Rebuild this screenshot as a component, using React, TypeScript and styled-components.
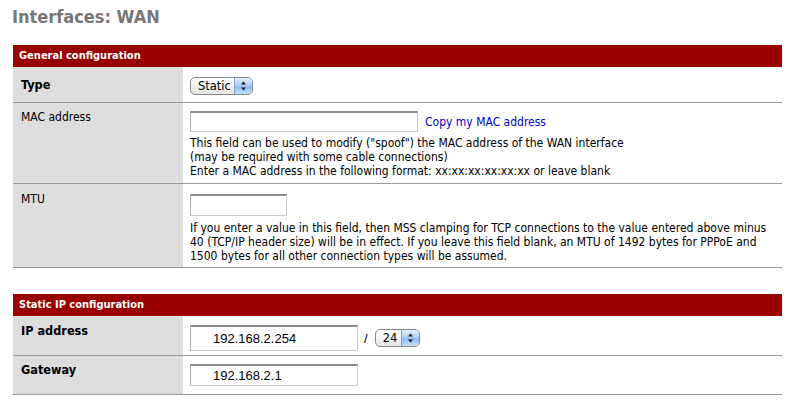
import React from 'react'
import styled, { createGlobalStyle } from 'styled-components'

const GlobalStyle = createGlobalStyle`
  body {
    margin: 0;
    background: #fff;
    font-family: "DejaVu Sans Condensed", "Liberation Sans", sans-serif;
    font-size: 12px;
    color: #000;
  }
`

const Page = styled.div`
  width: 802px;
  padding: 7px 20px 20px 13px;
  box-sizing: border-box;
`

const Title = styled.h1`
  margin: 0 0 0 -1px;
  font-family: "DejaVu Sans Condensed", "Liberation Sans", sans-serif;
  font-size: 18px;
  font-weight: bold;
  color: #777;
  line-height: 20px;
`

const Section = styled.div<{ $gap?: number }>`
  width: 769px;
  margin-top: ${p => p.$gap ?? 0}px;
`

const SectionHead = styled.div`
  background: #990000;
  color: #fff;
  font-weight: bold;
  font-size: 11px;
  height: 22px;
  line-height: 22px;
  padding-left: 6px;
`

const Row = styled.div`
  display: grid;
  grid-template-columns: 170px 1fr;
  border-bottom: 1px solid #999;
`

const Label = styled.div<{ $bold?: boolean; $top: number }>`
  background: #dddddd;
  padding: ${p => p.$top}px 8px 0;
  font-weight: ${p => (p.$bold ? 'bold' : 'normal')};
  font-size: ${p => (p.$bold ? '12.6px' : '12px')};
`

const Cell = styled.div<{ $pad: string }>`
  padding: ${p => p.$pad};
  display: flex;
  flex-direction: column;
  align-items: flex-start;
`

const Inline = styled.div`
  display: flex;
  align-items: center;
`

const TextInput = styled.div<{ $w: number; $h: number }>`
  width: ${p => p.$w}px;
  height: ${p => p.$h}px;
  box-sizing: border-box;
  border: 1px solid #c8c8c8;
  border-top: 2px solid #8a8a8a;
  border-left-color: #b0b0b0;
  background: #fff;
  font-family: "Liberation Sans", sans-serif;
  font-size: 13px;
  line-height: ${p => p.$h - 3}px;
  padding-left: 22px;
`

const Select = styled.div<{ $w: number }>`
  width: ${p => p.$w}px;
  height: 18px;
  box-sizing: border-box;
  border: 1px solid #8a8a8a;
  border-radius: 5px;
  background: linear-gradient(#ffffff, #e4e4e4);
  display: flex;
  align-items: stretch;
  overflow: hidden;
  font-family: "DejaVu Sans", "Liberation Sans", sans-serif;
  font-size: 11.5px;
`

const SelectText = styled.div`
  flex: 1;
  padding-left: 7px;
  line-height: 16px;
`

const Stepper = styled.div`
  width: 17px;
  border-left: 1px solid #7d9bc4;
  background: linear-gradient(#e2effc, #a9ccf2 50%, #8cbaf0 55%, #c6e0fa);
  display: flex;
  align-items: center;
  justify-content: center;
`

const Link = styled.a`
  color: #0000cc;
  text-decoration: none;
  font-size: 12px;
  margin-left: 7px;
`

const Help = styled.div<{ $mt: number }>`
  margin-top: ${p => p.$mt}px;
  line-height: 14px;
  white-space: nowrap;
`

const Slash = styled.span`
  font-family: "Liberation Sans", sans-serif;
  font-size: 13px;
  margin: 0 7px 0 6px;
`

const Arrows = () => (
  <svg width="7" height="10" viewBox="0 0 7 10">
    <path d="M3.5 0.5 L6 3.5 H1 Z" fill="#1a1a1a" />
    <path d="M3.5 9.5 L6 6.5 H1 Z" fill="#1a1a1a" />
  </svg>
)

const FakeSelect = ({ value, width }: { value: string; width: number }) => (
  <Select $w={width}>
    <SelectText>{value}</SelectText>
    <Stepper>
      <Arrows />
    </Stepper>
  </Select>
)

export default function App() {
  return (
    <Page>
      <GlobalStyle />
      <Title>Interfaces: WAN</Title>
      <Section $gap={18}>
        <SectionHead>General configuration</SectionHead>
        <Row>
          <Label $bold $top={10}>Type</Label>
          <Cell $pad="10px 7px 7px">
            <FakeSelect value="Static" width={63} />
          </Cell>
        </Row>
        <Row>
          <Label $top={7}>MAC address</Label>
          <Cell $pad="8px 7px 5px">
            <Inline>
              <TextInput $w={228} $h={21} />
              <Link href="#">Copy my MAC address</Link>
            </Inline>
            <Help $mt={4}>
              This field can be used to modify ("spoof") the MAC address of the WAN interface
              <br />
              (may be required with some cable connections)
              <br />
              Enter a MAC address in the following format: xx:xx:xx:xx:xx:xx or leave blank
            </Help>
          </Cell>
        </Row>
        <Row>
          <Label $top={8}>MTU</Label>
          <Cell $pad="10px 7px 4px">
            <TextInput $w={97} $h={22} />
            <Help $mt={5}>
              If you enter a value in this field, then MSS clamping for TCP connections to the value entered above minus
              <br />
              40 (TCP/IP header size) will be in effect. If you leave this field blank, an MTU of 1492 bytes for PPPoE and
              <br />
              1500 bytes for all other connection types will be assumed.
            </Help>
          </Cell>
        </Row>
      </Section>
      <Section $gap={26}>
        <SectionHead>Static IP configuration</SectionHead>
        <Row>
          <Label $bold $top={7}>IP address</Label>
          <Cell $pad="9px 7px 4px">
            <Inline>
              <TextInput $w={168} $h={26}>192.168.2.254</TextInput>
              <Slash>/</Slash>
              <FakeSelect value="24" width={45} />
            </Inline>
          </Cell>
        </Row>
        <Row>
          <Label $bold $top={6}>Gateway</Label>
          <Cell $pad="8px 7px 8px">
            <TextInput $w={168} $h={22}>192.168.2.1</TextInput>
          </Cell>
        </Row>
      </Section>
    </Page>
  )
}
